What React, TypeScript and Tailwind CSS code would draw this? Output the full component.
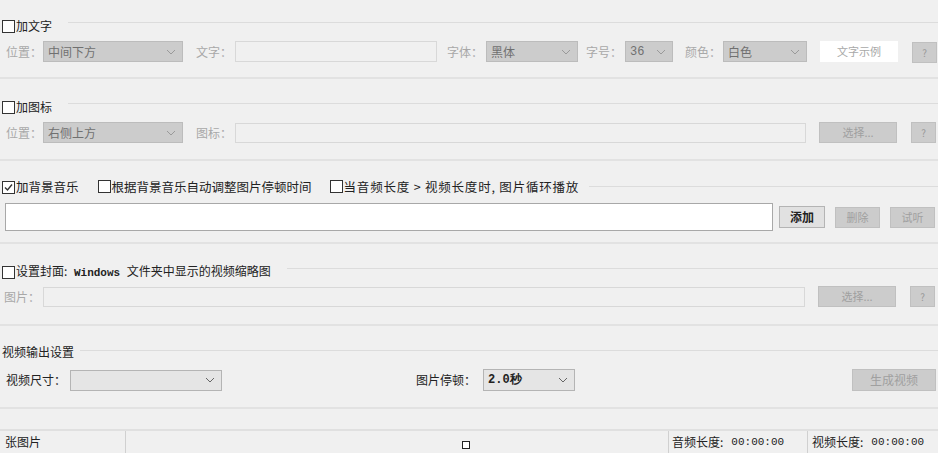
import React from "react";

const font = { fontFamily: '"Noto Sans CJK SC", "Noto Sans", sans-serif' };

function Box({ checked = false }: { checked?: boolean }) {
  return (
    <span className="inline-flex w-[13px] h-[13px] border border-[#333] bg-white items-center justify-center shrink-0">
      {checked && (
        <svg width="11" height="11" viewBox="0 0 11 11">
          <path d="M2 5.5 L4.5 8 L9 2.5" stroke="#333" strokeWidth="1.4" fill="none" />
        </svg>
      )}
    </span>
  );
}

function Chev({ light = true }: { light?: boolean }) {
  return (
    <svg width="10" height="6" viewBox="0 0 10 6" className="shrink-0">
      <path d="M1 1 L5 5 L9 1" stroke={light ? "#9a9a9a" : "#666"} strokeWidth="1" fill="none" />
    </svg>
  );
}

function DSelect({ w, text, mono = false }: { w: string; text: string; mono?: boolean }) {
  return (
    <div className={`${w} h-[21px] bg-[#cccccc] border border-[#bcbcbc] flex items-center justify-between pl-[4px] pr-[6px]`}>
      <span className={`text-[12px] text-[#707070] ${mono ? "font-['Liberation_Mono']" : ""}`}>{text}</span>
      <Chev />
    </div>
  );
}

function Header({ label, checked = false }: { label: React.ReactNode; checked?: boolean }) {
  return (
    <div className="flex items-center h-[14px]">
      <div className="flex items-center gap-[1px] pl-[2px]">
        <Box checked={checked} />
        <span className="text-[12px] text-[#222] leading-none">{label}</span>
      </div>
      <div className="flex-1 h-[1px] bg-[#dcdcdc] ml-[16px] mr-0 -mt-[8px]" />
    </div>
  );
}

function DButton({ w, text }: { w: string; text: string }) {
  return (
    <div className={`${w} h-[21px] bg-[#cccccc] border border-[#c0c0c0] flex items-center justify-center text-[11px] text-[#a0a0a0]`}>
      {text}
    </div>
  );
}

export default function App() {
  return (
    <div className="w-[938px] h-[453px] bg-[#f0f0f0] flex flex-col overflow-hidden text-[#222]" style={font}>
      {/* Section 1 */}
      <div className="h-[79px] border-b-2 border-[#e2e2e2] flex flex-col pt-[19px]">
        <Header label="加文字" />
        <div className="flex items-center mt-[7px] pl-[6px] text-[12px] text-[#a8a8a8]">
          <span className="w-[37px]">位置：</span>
          <DSelect w="w-[140px]" text="中间下方" />
          <span className="ml-[13px] w-[39px]">文字：</span>
          <div className="w-[202px] h-[21px] bg-[#f0f0f0] border border-[#d8d8d8]" />
          <span className="ml-[10px] w-[39px]">字体：</span>
          <DSelect w="w-[92px]" text="黑体" />
          <span className="ml-[8px] w-[39px]">字号：</span>
          <DSelect w="w-[48px]" text="36" mono />
          <span className="ml-[12px] w-[38px]">颜色：</span>
          <DSelect w="w-[84px]" text="白色" />
          <div className="ml-[13px] w-[78px] h-[21px] bg-white flex items-center justify-center text-[11px] text-[#a8a8a8]">文字示例</div>
          <div className="ml-[14px] w-[25px] h-[21px] mt-[2px] bg-[#cccccc] border border-[#c0c0c0] flex items-center justify-center text-[10px] text-[#999]">?</div>
        </div>
      </div>

      {/* Section 2 */}
      <div className="h-[82px] border-b-2 border-[#e2e2e2] flex flex-col pt-[21px]">
        <Header label="加图标" />
        <div className="flex items-center mt-[8px] pl-[6px] text-[12px] text-[#a8a8a8]">
          <span className="w-[37px]">位置：</span>
          <DSelect w="w-[140px]" text="右侧上方" />
          <span className="ml-[13px] w-[39px]">图标：</span>
          <div className="w-[571px] h-[20px] bg-[#f0f0f0] border border-[#d8d8d8]" />
          <div className="ml-[13px]"><DButton w="w-[78px]" text="选择..." /></div>
          <div className="ml-[14px] w-[25px] h-[21px] bg-[#cccccc] border border-[#c0c0c0] flex items-center justify-center text-[10px] text-[#999]">?</div>
        </div>
      </div>

      {/* Section 3 */}
      <div className="h-[83px] border-b-2 border-[#e2e2e2] flex flex-col pt-[19px]">
        <div className="flex items-center h-[14px]">
          <div className="flex items-center pl-[2px] text-[12.5px] text-[#222] leading-none">
            <Box checked />
            <span className="ml-[1px]">加背景音乐</span>
            <span className="ml-[19px]"><Box /></span>
            <span className="ml-[1px]">根据背景音乐自动调整图片停顿时间</span>
            <span className="ml-[18px]"><Box /></span>
            <span className="ml-[1px] tracking-[0.8px]">当音频长度 &gt; 视频长度时, 图片循环播放</span>
          </div>
          <div className="flex-1 h-[1px] bg-[#dcdcdc] ml-[10px] -mt-[2px]" />
        </div>
        <div className="flex items-center mt-[9px] pl-[5px]">
          <div className="w-[768px] h-[28px] bg-white border border-[#a8a8a8]" />
          <div className="ml-[6px] w-[46px] h-[22px] bg-[#e1e1e1] border border-[#b4b4b4] flex items-center justify-center text-[12px] font-bold text-[#222]">添加</div>
          <div className="ml-[10px]"><DButton w="w-[45px]" text="删除" /></div>
          <div className="ml-[10px]"><DButton w="w-[45px]" text="试听" /></div>
        </div>
      </div>

      {/* Section 4 */}
      <div className="h-[82px] border-b-2 border-[#e2e2e2] flex flex-col pt-[21px]">
        <Header
          label={
            <>
              设置封面:<span className="font-['Liberation_Mono'] text-[11px] font-bold"> Windows </span>文件夹中显示的视频缩略图
            </>
          }
        />
        <div className="flex items-center mt-[7px] pl-[4px] text-[12px] text-[#a8a8a8]">
          <span className="w-[39px]">图片：</span>
          <div className="w-[762px] h-[20px] bg-[#f0f0f0] border border-[#d8d8d8]" />
          <div className="ml-[13px]"><DButton w="w-[78px]" text="选择..." /></div>
          <div className="ml-[14px] w-[25px] h-[21px] bg-[#cccccc] border border-[#c0c0c0] flex items-center justify-center text-[10px] text-[#999]">?</div>
        </div>
      </div>

      {/* Section 5 */}
      <div className="h-[83px] border-b-2 border-[#e2e2e2] flex flex-col pt-[19px]">
        <div className="flex items-center h-[14px]">
          <span className="pl-[2px] text-[12px] text-[#222] leading-none">视频输出设置</span>
          <div className="flex-1 h-[1px] bg-[#dcdcdc] ml-[6px] -mt-[4px]" />
        </div>
        <div className="flex items-center mt-[10px] pl-[6px] text-[12px] text-[#222]">
          <span className="w-[64px]">视频尺寸：</span>
          <div className="w-[152px] h-[21px] bg-[#e5e5e5] border border-[#b4b4b4] flex items-center justify-end pr-[6px]">
            <Chev light={false} />
          </div>
          <span className="ml-[194px] w-[67px]">图片停顿：</span>
          <div className="w-[92px] h-[22px] bg-[#e5e5e5] border border-[#b4b4b4] flex items-center justify-between pl-[4px] pr-[6px]">
            <span className="text-[12px] font-['Liberation_Mono'] font-bold text-[#222]">2.0秒</span>
            <Chev light={false} />
          </div>
          <div className="ml-[277px] w-[84px] h-[22px] bg-[#cccccc] border border-[#c0c0c0] flex items-center justify-center text-[12px] text-[#a0a0a0]">生成视频</div>
        </div>
      </div>

      <div className="h-[20px]" />

      {/* Status bar */}
      <div className="flex-1 border-t-2 border-[#e0e0e0] flex items-center text-[12px] text-[#222]">
        <div className="w-[126px] h-full border-r border-[#d0d0d0] pl-[5px] flex items-center">张图片</div>
        <div className="w-[543px] h-full border-r border-[#d0d0d0] flex items-center pl-[336px]">
          <span className="w-[8px] h-[8px] border border-[#222] bg-white mt-[6px]" />
        </div>
        <div className="w-[139px] h-full border-r border-[#d0d0d0] pl-[3px] flex items-center">
          音频长度: <span className="ml-[8px] font-['Liberation_Mono'] text-[11px]">00:00:00</span>
        </div>
        <div className="flex-1 h-full pl-[4px] flex items-center">
          视频长度: <span className="ml-[8px] font-['Liberation_Mono'] text-[11px]">00:00:00</span>
        </div>
      </div>
    </div>
  );
}
